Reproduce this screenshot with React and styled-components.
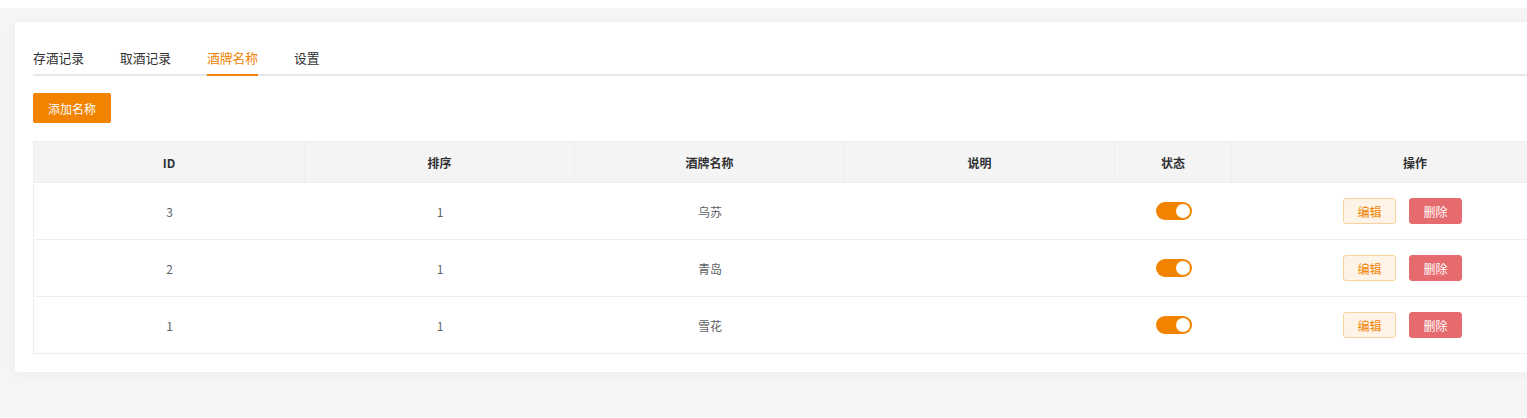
import React, { useState } from "react";
import styled, { createGlobalStyle } from "styled-components";

const Global = createGlobalStyle`
  html, body { margin: 0; padding: 0; overflow: hidden; background: #fff; }
  body { font-family: "Noto Sans CJK SC", "Noto Sans", sans-serif; }
  * { box-sizing: border-box; }
`;

const Main = styled.div`
  margin-top: 8px;
  background: #f5f5f5;
  height: 409px;
  padding: 14px 0 0 15px;
`;

const Card = styled.div`
  width: 1602px;
  background: #fff;
  padding: 12px 18px 18px;
  box-shadow: 0 2px 12px rgba(0, 0, 0, 0.035);
`;

const TabBar = styled.div`
  display: flex;
  gap: 36px;
  border-bottom: 2px solid #e4e7ed;
  height: 42px;
`;

const Tab = styled.div`
  height: 42px;
  padding-top: 8px;
  line-height: 32px;
  font-size: 12.75px;
  color: ${(p) => (p.$active ? "#f08300" : "#303133")};
  border-bottom: 2px solid ${(p) => (p.$active ? "#f08300" : "transparent")};
  cursor: pointer;
`;

const Toolbar = styled.div`
  padding: 17px 0 18px;
`;

const PrimaryButton = styled.button`
  height: 30px;
  padding: 0 15px;
  border: none;
  border-radius: 2px;
  background: #f18300;
  color: #fff;
  font-family: inherit;
  font-size: 12px;
  cursor: pointer;
`;

const Table = styled.div`
  display: grid;
  grid-template-columns: 271px 270px 270px 270px 117px 1fr;
  border-left: 1px solid #ebeef5;
  border-top: 1px solid #ebeef5;
`;

const HeadCell = styled.div`
  height: 41px;
  display: flex;
  align-items: center;
  justify-content: center;
  background: #f4f4f5;
  border-bottom: 1px solid #ebeef5;
  border-right: 1px solid #ebeef5;
  font-size: 12px;
  font-weight: 700;
  color: #303133;
`;

const Cell = styled.div`
  height: 57px;
  display: flex;
  align-items: center;
  justify-content: center;
  gap: 13px;
  padding-right: ${(p) => p.$offset || 0}px;
  border-bottom: 1px solid #ebeef5;
  font-size: 12px;
  color: #606266;
`;

const Switch = styled.button`
  width: 36px;
  height: 18px;
  border-radius: 9px;
  border: none;
  padding: 2px;
  display: flex;
  justify-content: ${(p) => (p.$on ? "flex-end" : "flex-start")};
  background: ${(p) => (p.$on ? "#f18300" : "#dcdfe6")};
  cursor: pointer;
  &::after {
    content: "";
    width: 14px;
    height: 14px;
    border-radius: 50%;
    background: #fff;
  }
`;

const SmallButton = styled.button`
  width: 53px;
  height: 26px;
  border-radius: 3px;
  font-family: inherit;
  font-size: 12px;
  cursor: pointer;
  border: 1px solid ${(p) => (p.$danger ? "#e66b6e" : "#f8d19d")};
  background: ${(p) => (p.$danger ? "#e66b6e" : "#fdf3e7")};
  color: ${(p) => (p.$danger ? "#fff" : "#f08300")};
`;

const tabs = ["存酒记录", "取酒记录", "酒牌名称", "设置"];
const headers = ["ID", "排序", "酒牌名称", "说明", "状态", "操作"];
const rows = [
  { id: 3, sort: 1, name: "乌苏", desc: "" },
  { id: 2, sort: 1, name: "青岛", desc: "" },
  { id: 1, sort: 1, name: "雪花", desc: "" },
];

export default function App() {
  const [active, setActive] = useState(2);
  return (
    <>
      <Global />
      <Main>
        <Card>
          <TabBar>
            {tabs.map((t, i) => (
              <Tab key={t} $active={i === active} onClick={() => setActive(i)}>
                {t}
              </Tab>
            ))}
          </TabBar>
          <Toolbar>
            <PrimaryButton>添加名称</PrimaryButton>
          </Toolbar>
          <Table>
            {headers.map((h) => (
              <HeadCell key={h}>{h}</HeadCell>
            ))}
            {rows.map((r) => (
              <React.Fragment key={r.id}>
                <Cell>{r.id}</Cell>
                <Cell>{r.sort}</Cell>
                <Cell>{r.name}</Cell>
                <Cell>{r.desc}</Cell>
                <Cell>
                  <Switch $on />
                </Cell>
                <Cell $offset={26}>
                  <SmallButton>编辑</SmallButton>
                  <SmallButton $danger>删除</SmallButton>
                </Cell>
              </React.Fragment>
            ))}
          </Table>
        </Card>
      </Main>
    </>
  );
}
